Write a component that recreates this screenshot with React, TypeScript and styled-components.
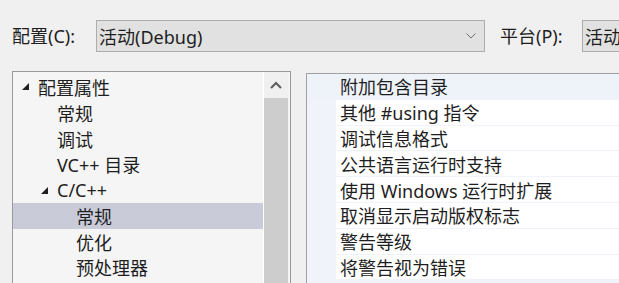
import styled, { createGlobalStyle } from 'styled-components';

const GlobalStyle = createGlobalStyle`
  html, body {
    margin: 0;
    padding: 0;
    background: #f0f0f0;
  }
  body {
    width: 619px;
    height: 283px;
    overflow: hidden;
    font-family: "Noto Sans", "Noto Sans CJK SC", sans-serif;
    color: #1e1e1e;
  }
`;

const Page = styled.div`
  width: 619px;
  height: 283px;
  overflow: hidden;
  display: flex;
  flex-direction: column;
`;

const TopBar = styled.div`
  display: flex;
  align-items: center;
  padding: 20px 0 0 12px;
  height: 32px;
  white-space: nowrap;
`;

const FieldLabel = styled.span<{ width: number }>`
  width: ${({ width }) => width}px;
  flex: none;
  font-size: 18px;
  line-height: 32px;
`;

const Combo = styled.div<{ width: number }>`
  box-sizing: border-box;
  width: ${({ width }) => width}px;
  flex: none;
  height: 32px;
  border: 1px solid #adadad;
  background: #e1e1e1;
  display: flex;
  align-items: center;
  padding: 0 8px 0 2px;
  font-size: 18px;
  margin-right: 15px;
`;

const ComboText = styled.span`
  flex: 1;
`;

const Chevron = () => (
  <svg width="10" height="6" viewBox="0 0 10 6">
    <path d="M0.5 0.5 L5 5 L9.5 0.5" fill="none" stroke="#707070" strokeWidth="1" />
  </svg>
);

const Main = styled.div`
  display: flex;
  align-items: flex-start;
  padding: 19px 0 0 12px;
  flex: 1;
  gap: 15px;
`;

const TreePanel = styled.div`
  box-sizing: border-box;
  width: 279px;
  height: 230px;
  border: 1px solid #999;
  border-bottom: none;
  background: #f5f5f5;
  display: flex;
`;

const TreeList = styled.div`
  width: 250px;
  padding-top: 2px;
  border-right: 1px solid #fff;
`;

const TreeRow = styled.div<{ level: number; selected?: boolean }>`
  height: 25.8px;
  display: flex;
  align-items: center;
  padding-left: ${({ level }) => 6 + level * 19}px;
  background: ${({ selected }) => (selected ? '#c9cbd9' : 'transparent')};
  font-size: 18px;
  white-space: nowrap;
`;

const Expander = styled.span`
  width: 17px;
  margin-left: -17px;
  display: flex;
  align-items: center;
`;

const Caret = () => (
  <svg width="9" height="9" viewBox="0 0 9 9">
    <path d="M8 1 L8 8 L1 8 Z" fill="#1e1e1e" />
  </svg>
);

const ScrollTrack = styled.div`
  width: 24px;
  background: #f0f0f0;
  display: flex;
  flex-direction: column;
  margin-right: 2px;
`;

const ScrollButton = styled.div`
  height: 26px;
  display: flex;
  align-items: center;
  justify-content: center;
`;

const ScrollThumb = styled.div`
  flex: 1;
  background: #cdcdcd;
`;

const GridPanel = styled.div`
  box-sizing: border-box;
  flex: 1;
  margin-top: 2px;
  height: 228px;
  border: 1px solid #a0a0a0;
  border-right: none;
  border-bottom: none;
  background: #f0f4fa;
  padding-left: 29px;
`;

const GridRow = styled.div<{ current?: boolean }>`
  box-sizing: border-box;
  height: 25.8px;
  display: flex;
  align-items: center;
  padding-left: 4px;
  margin-left: ${({ current }) => (current ? -29 : 0)}px;
  ${({ current }) => (current ? 'padding-left: 33px;' : '')}
  background: ${({ current }) => (current ? '#eef3fa' : '#fff')};
  border-bottom: 1px solid #f0f4fa;
  font-size: 18px;
  white-space: nowrap;
`;

const tree: { label: string; level: number; open?: boolean; selected?: boolean }[] = [
  { label: '配置属性', level: 1, open: true },
  { label: '常规', level: 2 },
  { label: '调试', level: 2 },
  { label: 'VC++ 目录', level: 2 },
  { label: 'C/C++', level: 2, open: true },
  { label: '常规', level: 3, selected: true },
  { label: '优化', level: 3 },
  { label: '预处理器', level: 3 },
];

const props = [
  '附加包含目录',
  '其他 #using 指令',
  '调试信息格式',
  '公共语言运行时支持',
  '使用 Windows 运行时扩展',
  '取消显示启动版权标志',
  '警告等级',
  '将警告视为错误',
];

export default function App() {
  return (
    <Page>
      <GlobalStyle />
      <TopBar>
        <FieldLabel width={84}>配置(C):</FieldLabel>
        <Combo width={389}>
          <ComboText>活动(Debug)</ComboText>
          <Chevron />
        </Combo>
        <FieldLabel width={82}>平台(P):</FieldLabel>
        <Combo width={200}>
          <ComboText>活动(x64)</ComboText>
        </Combo>
      </TopBar>
      <Main>
        <TreePanel>
          <TreeList>
            {tree.map((n, i) => (
              <TreeRow key={i} level={n.level} selected={n.selected}>
                {n.open && (
                  <Expander>
                    <Caret />
                  </Expander>
                )}
                {n.label}
              </TreeRow>
            ))}
          </TreeList>
          <ScrollTrack>
            <ScrollButton>
              <svg width="12" height="8" viewBox="0 0 12 8">
                <path d="M1 7 L6 2 L11 7" fill="none" stroke="#606060" strokeWidth="2.2" />
              </svg>
            </ScrollButton>
            <ScrollThumb />
          </ScrollTrack>
        </TreePanel>
        <GridPanel>
          {props.map((p, i) => (
            <GridRow key={i} current={i === 0}>
              {p}
            </GridRow>
          ))}
        </GridPanel>
      </Main>
    </Page>
  );
}
